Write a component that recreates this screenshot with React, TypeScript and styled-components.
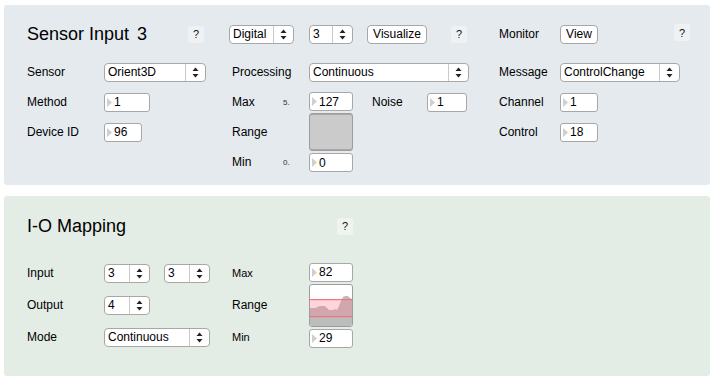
import React from "react";
import styled, { createGlobalStyle } from "styled-components";

const GlobalStyle = createGlobalStyle`
	html, body {
		margin: 0;
		padding: 0;
		background: #ffffff;
	}
	body {
		font-family: "Liberation Sans", Arial, sans-serif;
		font-size: 12px;
		color: #111;
	}
`;

const COLUMNS = "77px 128px 50px 27px 63px 55px 72px 61px 1fr";

type CellProps = { $col: string; $row?: string; $shift?: number; $justify?: string };

const Page = styled.div`
	display: flex;
	flex-direction: column;
	gap: 11px;
	padding: 5px 5px 0 4px;
	width: 706px;
`;

const Panel = styled.section<{ $bg: string; $pad: string }>`
	background: ${(p) => p.$bg};
	border-radius: 3px;
	height: 180px;
	box-sizing: border-box;
	padding: ${(p) => p.$pad};
	display: flex;
	flex-direction: column;
`;

const HeaderRow = styled.div`
	display: grid;
	grid-template-columns: ${COLUMNS};
	grid-template-rows: 30px;
	align-items: center;
`;

const Body = styled.div<{ $gapTop: number; $rowH: number }>`
	display: grid;
	grid-template-columns: ${COLUMNS};
	grid-auto-rows: ${(p) => p.$rowH}px;
	align-items: center;
	margin-top: ${(p) => p.$gapTop}px;
`;

const Cell = styled.div<CellProps>`
	grid-column: ${(p) => p.$col};
	grid-row: ${(p) => p.$row ?? "1"};
	margin-left: ${(p) => p.$shift ?? 0}px;
	justify-self: ${(p) => p.$justify ?? "start"};
	display: flex;
	align-items: center;
	min-width: 0;
`;

const Title = styled.h2`
	margin: 0;
	font-size: 18px;
	font-weight: normal;
	color: #000;
	white-space: nowrap;
	line-height: 22px;

	span {
		margin-left: 8px;
	}
`;

const Label = styled.span<{ $size?: number }>`
	font-size: ${(p) => p.$size ?? 12}px;
	color: #000;
	white-space: nowrap;
`;

const Tiny = styled.span`
	font-size: 8px;
	color: #333;
	padding-left: 1px;
`;

const Help = styled.div<{ $lift?: number }>`
	width: 16px;
	height: 17px;
	border-radius: 2px;
	background: rgba(255, 255, 255, 0.4);
	display: flex;
	align-items: center;
	justify-content: center;
	font-size: 11px;
	color: #111;
	margin-top: ${(p) => -(p.$lift ?? 0)}px;
`;

const Menu = styled.div<{ $w: number }>`
	width: ${(p) => p.$w}px;
	height: 19px;
	box-sizing: border-box;
	border: 1px solid #a7a7a7;
	border-radius: 4px;
	background: #fff;
	display: flex;
	align-items: stretch;
`;

const MenuText = styled.span`
	flex: 1;
	padding-left: 3px;
	line-height: 17px;
	font-size: 12px;
	color: #000;
	white-space: nowrap;
	overflow: hidden;
`;

const MenuArrows = styled.span`
	width: 19px;
	border-left: 1px solid #c9c9c9;
	display: flex;
	align-items: center;
	justify-content: center;
`;

const NumBox = styled.div<{ $w: number }>`
	width: ${(p) => p.$w}px;
	height: 19px;
	box-sizing: border-box;
	border: 1px solid #a7a7a7;
	border-radius: 3px;
	background: #fff;
	display: flex;
	align-items: center;
	padding-left: 2px;
	gap: 2px;
	font-size: 12px;
	color: #000;
`;

const Button = styled.div<{ $w: number }>`
	width: ${(p) => p.$w}px;
	height: 19px;
	box-sizing: border-box;
	border: 1px solid #a7a7a7;
	border-radius: 4px;
	background: #fff;
	display: flex;
	align-items: center;
	justify-content: center;
	font-size: 12px;
	color: #000;
`;

const MenuPair = styled.div`
	display: flex;
	gap: 14px;
`;

const Stack = styled.div`
	display: flex;
	flex-direction: column;
	gap: 2px;
	width: 44px;
`;

const RangeBox = styled.div<{ $h: number }>`
	height: ${(p) => p.$h}px;
	box-sizing: border-box;
	border: 1px solid #9c9c9c;
	border-radius: 3px;
	background: #cbcbcb;
	box-shadow: inset 0 1px 0 #a9a9a9, inset 0 -1px 0 #a9a9a9;
	overflow: hidden;
	display: flex;
`;

const Arrows = () => (
	<svg width="7" height="11" viewBox="0 0 7 11">
		<path d="M3.5 0.5 L6.5 4 L0.5 4 Z" fill="#222" />
		<path d="M3.5 10.5 L6.5 7 L0.5 7 Z" fill="#222" />
	</svg>
);

const NumTri = () => (
	<svg width="5" height="9" viewBox="0 0 5 9">
		<path d="M0 0 L5 4.5 L0 9 Z" fill="#cfcfcf" />
	</svg>
);

const Dropdown = ({ w, value }: { w: number; value: string }) => (
	<Menu $w={w}>
		<MenuText>{value}</MenuText>
		<MenuArrows>
			<Arrows />
		</MenuArrows>
	</Menu>
);

const Number = ({ w, value }: { w: number; value: string }) => (
	<NumBox $w={w}>
		<NumTri />
		<span>{value}</span>
	</NumBox>
);

// history plot with the selected band drawn over it
const Scope = () => (
	<svg width="42" height="41" viewBox="0 0 42 41" preserveAspectRatio="none">
		<rect x="0" y="0" width="42" height="41" fill="#ffffff" />
		<path
			d="M0 23 L6 23 L7 22 L10 21 L15 21 L17 23 L19 25 L23 25 L25 24 L27 25 L29 21 L31 16 L33 12 L35 11 L38 11 L40 13 L42 14 L42 41 L0 41 Z"
			fill="#bcbcbc"
		/>
		<rect x="0" y="14.5" width="42" height="17" fill="rgba(255, 120, 140, 0.32)" />
		<rect x="0" y="14" width="42" height="1.2" fill="#f17382" />
		<rect x="0" y="31" width="42" height="1.2" fill="#f17382" />
	</svg>
);

const App = () => {
	return (
		<>
			<GlobalStyle />
			<Page>
				<Panel $bg="#e4eaee" $pad="14px 0 8px 23px">
					<HeaderRow>
						<Cell $col="1 / 3">
							<Title>
								Sensor Input<span>3</span>
							</Title>
						</Cell>
						<Cell $col="2" $shift={84}>
							<Help>?</Help>
						</Cell>
						<Cell $col="3 / 5" $shift={-3}>
							<Dropdown w={65} value="Digital" />
						</Cell>
						<Cell $col="5">
							<Dropdown w={44} value="3" />
						</Cell>
						<Cell $col="6 / 8" $shift={-5}>
							<Button $w={60}>Visualize</Button>
						</Cell>
						<Cell $col="7" $shift={24}>
							<Help>?</Help>
						</Cell>
						<Cell $col="8">
							<Label>Monitor</Label>
						</Cell>
						<Cell $col="9">
							<Button $w={38}>View</Button>
						</Cell>
						<Cell $col="9" $shift={114}>
							<Help $lift={3}>?</Help>
						</Cell>
					</HeaderRow>

					<Body $gapTop={8} $rowH={30}>
						<Cell $col="1" $row="1">
							<Label>Sensor</Label>
						</Cell>
						<Cell $col="2" $row="1">
							<Dropdown w={102} value="Orient3D" />
						</Cell>
						<Cell $col="3 / 5" $row="1">
							<Label>Processing</Label>
						</Cell>
						<Cell $col="5 / 8" $row="1">
							<Dropdown w={160} value="Continuous" />
						</Cell>
						<Cell $col="8" $row="1">
							<Label>Message</Label>
						</Cell>
						<Cell $col="9" $row="1">
							<Dropdown w={120} value="ControlChange" />
						</Cell>

						<Cell $col="1" $row="2">
							<Label>Method</Label>
						</Cell>
						<Cell $col="2" $row="2">
							<Number w={46} value="1" />
						</Cell>
						<Cell $col="3" $row="2">
							<Label>Max</Label>
						</Cell>
						<Cell $col="4" $row="2">
							<Tiny>5.</Tiny>
						</Cell>
						<Cell $col="5" $row="2 / 5">
							<Stack>
								<Number w={44} value="127" />
								<RangeBox $h={38} />
								<Number w={44} value="0" />
							</Stack>
						</Cell>
						<Cell $col="6" $row="2">
							<Label>Noise</Label>
						</Cell>
						<Cell $col="7" $row="2">
							<Number w={40} value="1" />
						</Cell>
						<Cell $col="8" $row="2">
							<Label>Channel</Label>
						</Cell>
						<Cell $col="9" $row="2">
							<Number w={38} value="1" />
						</Cell>

						<Cell $col="1" $row="3">
							<Label>Device ID</Label>
						</Cell>
						<Cell $col="2" $row="3">
							<Number w={38} value="96" />
						</Cell>
						<Cell $col="3" $row="3">
							<Label>Range</Label>
						</Cell>
						<Cell $col="8" $row="3">
							<Label>Control</Label>
						</Cell>
						<Cell $col="9" $row="3">
							<Number w={38} value="18" />
						</Cell>

						<Cell $col="3" $row="4">
							<Label>Min</Label>
						</Cell>
						<Cell $col="4" $row="4">
							<Tiny>0.</Tiny>
						</Cell>
					</Body>
				</Panel>

				<Panel $bg="#e4ede5" $pad="15px 0 23px 23px">
					<HeaderRow>
						<Cell $col="1 / 3">
							<Title>I-O Mapping</Title>
						</Cell>
						<Cell $col="5" $shift={28}>
							<Help>?</Help>
						</Cell>
					</HeaderRow>

					<Body $gapTop={16} $rowH={32}>
						<Cell $col="1" $row="1">
							<Label>Input</Label>
						</Cell>
						<Cell $col="2" $row="1">
							<MenuPair>
								<Dropdown w={46} value="3" />
								<Dropdown w={46} value="3" />
							</MenuPair>
						</Cell>
						<Cell $col="3" $row="1">
							<Label $size={11}>Max</Label>
						</Cell>
						<Cell $col="5" $row="1 / 4">
							<Stack>
								<Number w={44} value="82" />
								<RangeBox $h={43}>
									<Scope />
								</RangeBox>
								<Number w={44} value="29" />
							</Stack>
						</Cell>

						<Cell $col="1" $row="2">
							<Label>Output</Label>
						</Cell>
						<Cell $col="2" $row="2">
							<Dropdown w={46} value="4" />
						</Cell>
						<Cell $col="3" $row="2">
							<Label>Range</Label>
						</Cell>

						<Cell $col="1" $row="3">
							<Label>Mode</Label>
						</Cell>
						<Cell $col="2" $row="3">
							<Dropdown w={106} value="Continuous" />
						</Cell>
						<Cell $col="3" $row="3">
							<Label $size={11}>Min</Label>
						</Cell>
					</Body>
				</Panel>
			</Page>
		</>
	);
};

export default App;
